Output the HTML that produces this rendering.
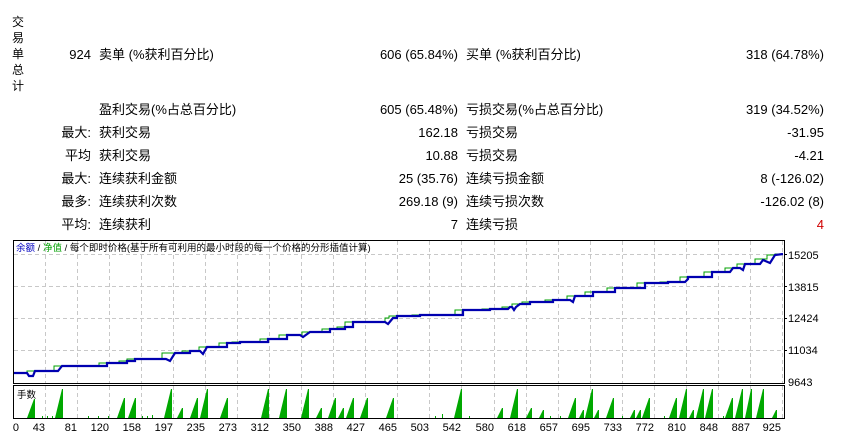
<!DOCTYPE html>
<html><head><meta charset="utf-8"><style>
body{margin:0;background:#fff;width:847px;height:436px;overflow:hidden;position:relative;font-family:"Liberation Sans","Noto Sans CJK SC",sans-serif;font-size:13px;color:#000}
.t{position:absolute;white-space:nowrap;line-height:16px}
.r{text-align:right}
</style></head><body>
<div class="t" style="left:12px;top:14px;line-height:16px;width:14px;font-size:12px">交<br>易<br>单<br>总<br>计</div>

<div class="t r" style="right:756px;top:47px">924</div>
<div class="t" style="left:99px;top:47px">卖单 (%获利百分比)</div>
<div class="t r" style="right:389px;top:47px">606 (65.84%)</div>
<div class="t" style="left:466px;top:47px">买单 (%获利百分比)</div>
<div class="t r" style="right:23px;top:47px">318 (64.78%)</div>

<div class="t" style="left:99px;top:102px">盈利交易(%占总百分比)</div>
<div class="t r" style="right:389px;top:102px">605 (65.48%)</div>
<div class="t" style="left:466px;top:102px">亏损交易(%占总百分比)</div>
<div class="t r" style="right:23px;top:102px">319 (34.52%)</div>

<div class="t r" style="right:756px;top:125px">最大:</div>
<div class="t" style="left:99px;top:125px">获利交易</div>
<div class="t r" style="right:389px;top:125px">162.18</div>
<div class="t" style="left:466px;top:125px">亏损交易</div>
<div class="t r" style="right:23px;top:125px">-31.95</div>

<div class="t r" style="right:756px;top:148px">平均</div>
<div class="t" style="left:99px;top:148px">获利交易</div>
<div class="t r" style="right:389px;top:148px">10.88</div>
<div class="t" style="left:466px;top:148px">亏损交易</div>
<div class="t r" style="right:23px;top:148px">-4.21</div>

<div class="t r" style="right:756px;top:171px">最大:</div>
<div class="t" style="left:99px;top:171px">连续获利金额</div>
<div class="t r" style="right:389px;top:171px">25 (35.76)</div>
<div class="t" style="left:466px;top:171px">连续亏损金额</div>
<div class="t r" style="right:23px;top:171px">8 (-126.02)</div>

<div class="t r" style="right:756px;top:194px">最多:</div>
<div class="t" style="left:99px;top:194px">连续获利次数</div>
<div class="t r" style="right:389px;top:194px">269.18 (9)</div>
<div class="t" style="left:466px;top:194px">连续亏损次数</div>
<div class="t r" style="right:23px;top:194px">-126.02 (8)</div>

<div class="t r" style="right:756px;top:217px">平均:</div>
<div class="t" style="left:99px;top:217px">连续获利</div>
<div class="t r" style="right:389px;top:217px">7</div>
<div class="t" style="left:466px;top:217px">连续亏损</div>
<div class="t r" style="right:23px;top:217px;color:#d00000">4</div>

<svg style="position:absolute;left:0;top:0" width="847" height="436" font-family="Liberation Sans, Noto Sans CJK SC, sans-serif">
<g stroke="#c8c8c8" stroke-dasharray="4,3" stroke-width="1">
<line x1="14" y1="254.5" x2="783" y2="254.5"/><line x1="14" y1="286.5" x2="783" y2="286.5"/><line x1="14" y1="318.5" x2="783" y2="318.5"/><line x1="14" y1="350.5" x2="783" y2="350.5"/>
<path d="M45.5 241V383M77.5 241V383M109.5 241V383M141.5 241V383M173.5 241V383M205.5 241V383M237.5 241V383M269.5 241V383M301.5 241V383M333.5 241V383M365.5 241V383M397.5 241V383M429.5 241V383M461.5 241V383M494.5 241V383M526.5 241V383M558.5 241V383M590.5 241V383M622.5 241V383M654.5 241V383M686.5 241V383M718.5 241V383M750.5 241V383M782.5 241V383"/>
<path d="M45.5 386V418M77.5 386V418M109.5 386V418M141.5 386V418M173.5 386V418M205.5 386V418M237.5 386V418M269.5 386V418M301.5 386V418M333.5 386V418M365.5 386V418M397.5 386V418M429.5 386V418M461.5 386V418M494.5 386V418M526.5 386V418M558.5 386V418M590.5 386V418M622.5 386V418M654.5 386V418M686.5 386V418M718.5 386V418M750.5 386V418M782.5 386V418"/>
</g>
<rect x="13.5" y="240.5" width="771" height="143" fill="none" stroke="#000" stroke-width="1"/>
<line x1="13" y1="383.5" x2="785" y2="383.5" stroke="#000"/>
<rect x="13.5" y="385.5" width="771" height="33" fill="none" stroke="#000"/>
<text x="16" y="251" font-size="9.5"><tspan fill="#0000c0">余额</tspan> / <tspan fill="#00a000">净值</tspan> / 每个即时价格(基于所有可利用的最小时段的每一个价格的分形插值计算)</text>
<text x="17" y="398" font-size="9.5">手数</text>
<polyline fill="none" stroke="#00a000" stroke-width="1" points="14,373 27,373 27,371 54,371 54,366 99,366 99,363 119,363 119,361 127,361 127,359 162,359 162,353 182,353 182,351 199,351 199,347 219,347 219,343 232,343 232,342 260,342 260,339 279,339 279,335 302,335 302,332 322,332 322,329 337,329 337,327 345,327 345,322 385,322 385,318 389,318 389,316 412,316 412,315 455,315 455,310 482,310 482,309 502,309 502,307 512,307 512,304 522,304 522,302 545,302 545,300 567,300 567,296 585,296 585,292 607,292 607,288 637,288 637,283 660,283 660,282 680,282 680,277 704,277 704,272 725,272 725,268 737,268 737,264 755,264 755,259 767,259 767,255 775,255 775,254 783,254"/>
<polyline fill="none" stroke="#0000b0" stroke-width="2.2" points="14,373 27,373 29,376 33,376 35,371 58,371 62,366 107,366 107,363 127,363 127,361 135,361 135,359 166,359 170,361 175,353 190,353 190,351 200,351 203,354 207,347 227,347 227,343 240,343 240,342 268,342 268,339 287,339 287,335 300,335 303,337 310,332 330,332 330,329 345,329 345,327 353,327 353,322 385,322 388,324 393,318 397,318 397,316 420,316 420,315 442,315 463,315 463,310 490,310 490,309 508,309 510,307 512,307 514,310 516,307 520,304 530,304 530,302 553,302 553,300 570,300 573,302 575,296 593,296 593,292 615,292 615,288 645,288 645,283 668,283 668,282 685,282 688,279 688,277 712,277 712,272 730,272 733,268 740,268 743,270 745,264 760,264 763,260 770,263 775,255 783,254"/>
<g fill="#00a800">
<polygon points="27,418 34,399 35,399 35,418"/><polygon points="55,418 62,389 63,389 63,418"/><polygon points="117,418 124,398 125,398 125,418"/><polygon points="128,418 135,398 136,398 136,418"/><polygon points="164,418 171,389 172,389 172,418"/><polygon points="177,418 182,408 183,408 183,418"/><polygon points="190,418 197,398 198,398 198,418"/><polygon points="200,418 207,389 208,389 208,418"/><polygon points="220,418 227,398 228,398 228,418"/><polygon points="261,418 268,389 269,389 269,418"/><polygon points="279,418 286,389 287,389 287,418"/><polygon points="301,418 308,389 309,389 309,418"/><polygon points="316,418 321,408 322,408 322,418"/><polygon points="328,418 335,398 336,398 336,418"/><polygon points="338,418 343,408 344,408 344,418"/><polygon points="346,418 353,398 354,398 354,418"/><polygon points="360,418 367,398 368,398 368,418"/><polygon points="386,418 393,398 394,398 394,418"/><polygon points="454,418 461,389 462,389 462,418"/><polygon points="497,418 502,408 503,408 503,418"/><polygon points="510,418 517,389 518,389 518,418"/><polygon points="526,418 531,408 532,408 532,418"/><polygon points="539,418 543,410 544,410 544,418"/><polygon points="568,418 575,398 576,398 576,418"/><polygon points="579,418 583,410 584,410 584,418"/><polygon points="585,418 592,389 593,389 593,418"/><polygon points="594,418 598,410 599,410 599,418"/><polygon points="606,418 613,398 614,398 614,418"/><polygon points="630,418 634,410 635,410 635,418"/><polygon points="636,418 640,410 641,410 641,418"/><polygon points="642,418 649,398 650,398 650,418"/><polygon points="669,418 676,398 677,398 677,418"/><polygon points="679,418 686,389 687,389 687,418"/><polygon points="689,418 693,410 694,410 694,418"/><polygon points="696,418 703,389 704,389 704,418"/><polygon points="705,418 712,389 713,389 713,418"/><polygon points="725,418 732,398 733,398 733,418"/><polygon points="735,418 742,389 743,389 743,418"/><polygon points="745,418 751,389 752,389 752,418"/><polygon points="756,418 763,389 764,389 764,418"/><polygon points="772,418 776,410 777,410 777,418"/>
<rect x="42" y="416" width="1" height="2"/><rect x="47" y="416" width="1" height="2"/><rect x="52" y="416" width="1" height="2"/><rect x="88" y="416" width="1" height="2"/><rect x="98" y="416" width="1" height="2"/><rect x="108" y="416" width="1" height="2"/><rect x="142" y="416" width="1" height="2"/><rect x="147" y="416" width="1" height="2"/><rect x="152" y="415" width="1" height="3"/><rect x="435" y="416" width="1" height="2"/><rect x="442" y="414" width="1" height="4"/><rect x="469" y="416" width="1" height="2"/><rect x="550" y="416" width="1" height="2"/><rect x="560" y="416" width="1" height="2"/><rect x="622" y="416" width="1" height="2"/><rect x="664" y="416" width="1" height="2"/><rect x="723" y="416" width="1" height="2"/></g>
<g font-size="11" text-anchor="end">
<text x="19" y="431">0</text><text x="45" y="431">43</text><text x="77" y="431">81</text><text x="109" y="431">120</text><text x="141" y="431">158</text><text x="173" y="431">197</text><text x="205" y="431">235</text><text x="237" y="431">273</text><text x="269" y="431">312</text><text x="301" y="431">350</text><text x="333" y="431">388</text><text x="365" y="431">427</text><text x="397" y="431">465</text><text x="429" y="431">503</text><text x="461" y="431">542</text><text x="494" y="431">580</text><text x="526" y="431">618</text><text x="558" y="431">657</text><text x="590" y="431">695</text><text x="622" y="431">733</text><text x="654" y="431">772</text><text x="686" y="431">810</text><text x="718" y="431">848</text><text x="750" y="431">887</text><text x="781" y="431">925</text>
</g>
<g font-size="11">
<text x="788" y="259">15205</text><text x="788" y="291">13815</text><text x="788" y="322">12424</text><text x="788" y="354">11034</text><text x="788" y="386">9643</text>
</g>
<g stroke="#000"><line x1="785" y1="254.5" x2="787" y2="254.5"/><line x1="785" y1="286.5" x2="787" y2="286.5"/><line x1="785" y1="318.5" x2="787" y2="318.5"/><line x1="785" y1="350.5" x2="787" y2="350.5"/></g>
</svg>
</body></html>
